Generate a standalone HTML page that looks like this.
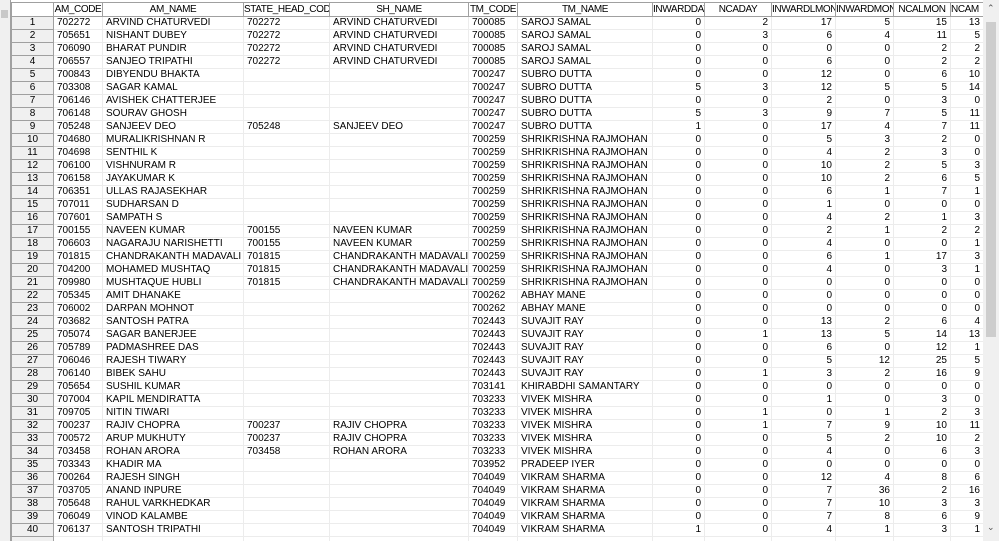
<!DOCTYPE html><html><head><style>
body{margin:0;width:999px;height:541px;overflow:hidden;background:#fff;font-family:"Liberation Sans",Arial,sans-serif;font-size:10px;color:#000;position:relative}
#ls{position:absolute;left:0;top:0;width:10px;height:541px;background:#f0f0f0;border-right:1px solid #a0a0a0}
#ls div{position:absolute;left:1px;top:10px;width:7px;height:8px;background:#c8c8c8}
#w{position:absolute;left:11px;top:2px;width:972px;height:539px;overflow:hidden}
#g{border-collapse:collapse;table-layout:fixed;width:972px}
#g td,#g th{height:12px;padding:0 3px;white-space:nowrap;overflow:hidden;line-height:12px;border:1px solid #ececec}
#g th{font-weight:normal;background:#fff;border:1px solid #a0a0a0;height:13px;padding:0;letter-spacing:-0.4px}
#g td.r{background:#f0f0f0;border:1px solid #a0a0a0;text-align:center}
#g td.n{text-align:right}
#sb{position:absolute;left:983px;top:0;width:16px;height:541px;background:#f0f0f0}
#th{position:absolute;left:3px;top:22px;width:10px;height:315px;background:#cdcdcd}
</style></head><body>
<div id="ls"><div></div></div>
<div id="w">
<table id="g">
<colgroup><col style="width:42px"><col style="width:49px"><col style="width:141px"><col style="width:86px"><col style="width:139px"><col style="width:49px"><col style="width:135px"><col style="width:52px"><col style="width:67px"><col style="width:64px"><col style="width:58px"><col style="width:57px"><col style="width:33px"></colgroup>
<tr><th></th><th>AM_CODE</th><th>AM_NAME</th><th>STATE_HEAD_CODE</th><th>SH_NAME</th><th>TM_CODE</th><th>TM_NAME</th><th>INWARDDAY</th><th>NCADAY</th><th>INWARDLMON</th><th>INWARDMON</th><th>NCALMON</th><th style="text-align:left">NCAM</th></tr>
<tbody id="b"></tbody></table></div>
<div id="sb"><div id="th"></div><div style="position:absolute;top:3px;left:4px;font-size:9px;color:#555">&#8963;</div><div style="position:absolute;top:522px;left:4px;font-size:9px;color:#555">&#8964;</div></div>
<script>
var d=`702272|ARVIND CHATURVEDI|702272|ARVIND CHATURVEDI|700085|SAROJ SAMAL|0|2|17|5|15|13
705651|NISHANT DUBEY|702272|ARVIND CHATURVEDI|700085|SAROJ SAMAL|0|3|6|4|11|5
706090|BHARAT PUNDIR|702272|ARVIND CHATURVEDI|700085|SAROJ SAMAL|0|0|0|0|2|2
706557|SANJEO TRIPATHI|702272|ARVIND CHATURVEDI|700085|SAROJ SAMAL|0|0|6|0|2|2
700843|DIBYENDU BHAKTA|||700247|SUBRO DUTTA|0|0|12|0|6|10
703308|SAGAR KAMAL|||700247|SUBRO DUTTA|5|3|12|5|5|14
706146|AVISHEK CHATTERJEE|||700247|SUBRO DUTTA|0|0|2|0|3|0
706148|SOURAV GHOSH|||700247|SUBRO DUTTA|5|3|9|7|5|11
705248|SANJEEV DEO|705248|SANJEEV DEO|700247|SUBRO DUTTA|1|0|17|4|7|11
704680|MURALIKRISHNAN R|||700259|SHRIKRISHNA RAJMOHAN|0|0|5|3|2|0
704698|SENTHIL K|||700259|SHRIKRISHNA RAJMOHAN|0|0|4|2|3|0
706100|VISHNURAM R|||700259|SHRIKRISHNA RAJMOHAN|0|0|10|2|5|3
706158|JAYAKUMAR K|||700259|SHRIKRISHNA RAJMOHAN|0|0|10|2|6|5
706351|ULLAS RAJASEKHAR|||700259|SHRIKRISHNA RAJMOHAN|0|0|6|1|7|1
707011|SUDHARSAN D|||700259|SHRIKRISHNA RAJMOHAN|0|0|1|0|0|0
707601|SAMPATH S|||700259|SHRIKRISHNA RAJMOHAN|0|0|4|2|1|3
700155|NAVEEN KUMAR|700155|NAVEEN KUMAR|700259|SHRIKRISHNA RAJMOHAN|0|0|2|1|2|2
706603|NAGARAJU NARISHETTI|700155|NAVEEN KUMAR|700259|SHRIKRISHNA RAJMOHAN|0|0|4|0|0|1
701815|CHANDRAKANTH MADAVALI|701815|CHANDRAKANTH MADAVALI|700259|SHRIKRISHNA RAJMOHAN|0|0|6|1|17|3
704200|MOHAMED MUSHTAQ|701815|CHANDRAKANTH MADAVALI|700259|SHRIKRISHNA RAJMOHAN|0|0|4|0|3|1
709980|MUSHTAQUE HUBLI|701815|CHANDRAKANTH MADAVALI|700259|SHRIKRISHNA RAJMOHAN|0|0|0|0|0|0
705345|AMIT DHANAKE|||700262|ABHAY MANE|0|0|0|0|0|0
706002|DARPAN MOHNOT|||700262|ABHAY MANE|0|0|0|0|0|0
703682|SANTOSH PATRA|||702443|SUVAJIT RAY|0|0|13|2|6|4
705074|SAGAR BANERJEE|||702443|SUVAJIT RAY|0|1|13|5|14|13
705789|PADMASHREE DAS|||702443|SUVAJIT RAY|0|0|6|0|12|1
706046|RAJESH TIWARY|||702443|SUVAJIT RAY|0|0|5|12|25|5
706140|BIBEK SAHU|||702443|SUVAJIT RAY|0|1|3|2|16|9
705654|SUSHIL KUMAR|||703141|KHIRABDHI SAMANTARY|0|0|0|0|0|0
707004|KAPIL MENDIRATTA|||703233|VIVEK MISHRA|0|0|1|0|3|0
709705|NITIN TIWARI|||703233|VIVEK MISHRA|0|1|0|1|2|3
700237|RAJIV CHOPRA|700237|RAJIV CHOPRA|703233|VIVEK MISHRA|0|1|7|9|10|11
700572|ARUP MUKHUTY|700237|RAJIV CHOPRA|703233|VIVEK MISHRA|0|0|5|2|10|2
703458|ROHAN ARORA|703458|ROHAN ARORA|703233|VIVEK MISHRA|0|0|4|0|6|3
703343|KHADIR MA|||703952|PRADEEP IYER|0|0|0|0|0|0
700264|RAJESH SINGH|||704049|VIKRAM SHARMA|0|0|12|4|8|6
703705|ANAND INPURE|||704049|VIKRAM SHARMA|0|0|7|36|2|16
705648|RAHUL VARKHEDKAR|||704049|VIKRAM SHARMA|0|0|7|10|3|3
706049|VINOD KALAMBE|||704049|VIKRAM SHARMA|0|0|7|8|6|9
706137|SANTOSH TRIPATHI|||704049|VIKRAM SHARMA|1|0|4|1|3|1`.split('\n');
var h='';d.forEach(function(l,i){var c=l.split('|');h+='<tr><td class="r">'+(i+1)+'</td>';c.forEach(function(v,j){h+='<td'+(j>=6?' class="n"':'')+'>'+v+'</td>'});h+='</tr>'});
h+='<tr><td class="r"></td><td></td><td></td><td></td><td></td><td></td><td></td><td></td><td></td><td></td><td></td><td></td><td></td></tr>';
document.getElementById('b').innerHTML=h;
</script>
</body></html>
